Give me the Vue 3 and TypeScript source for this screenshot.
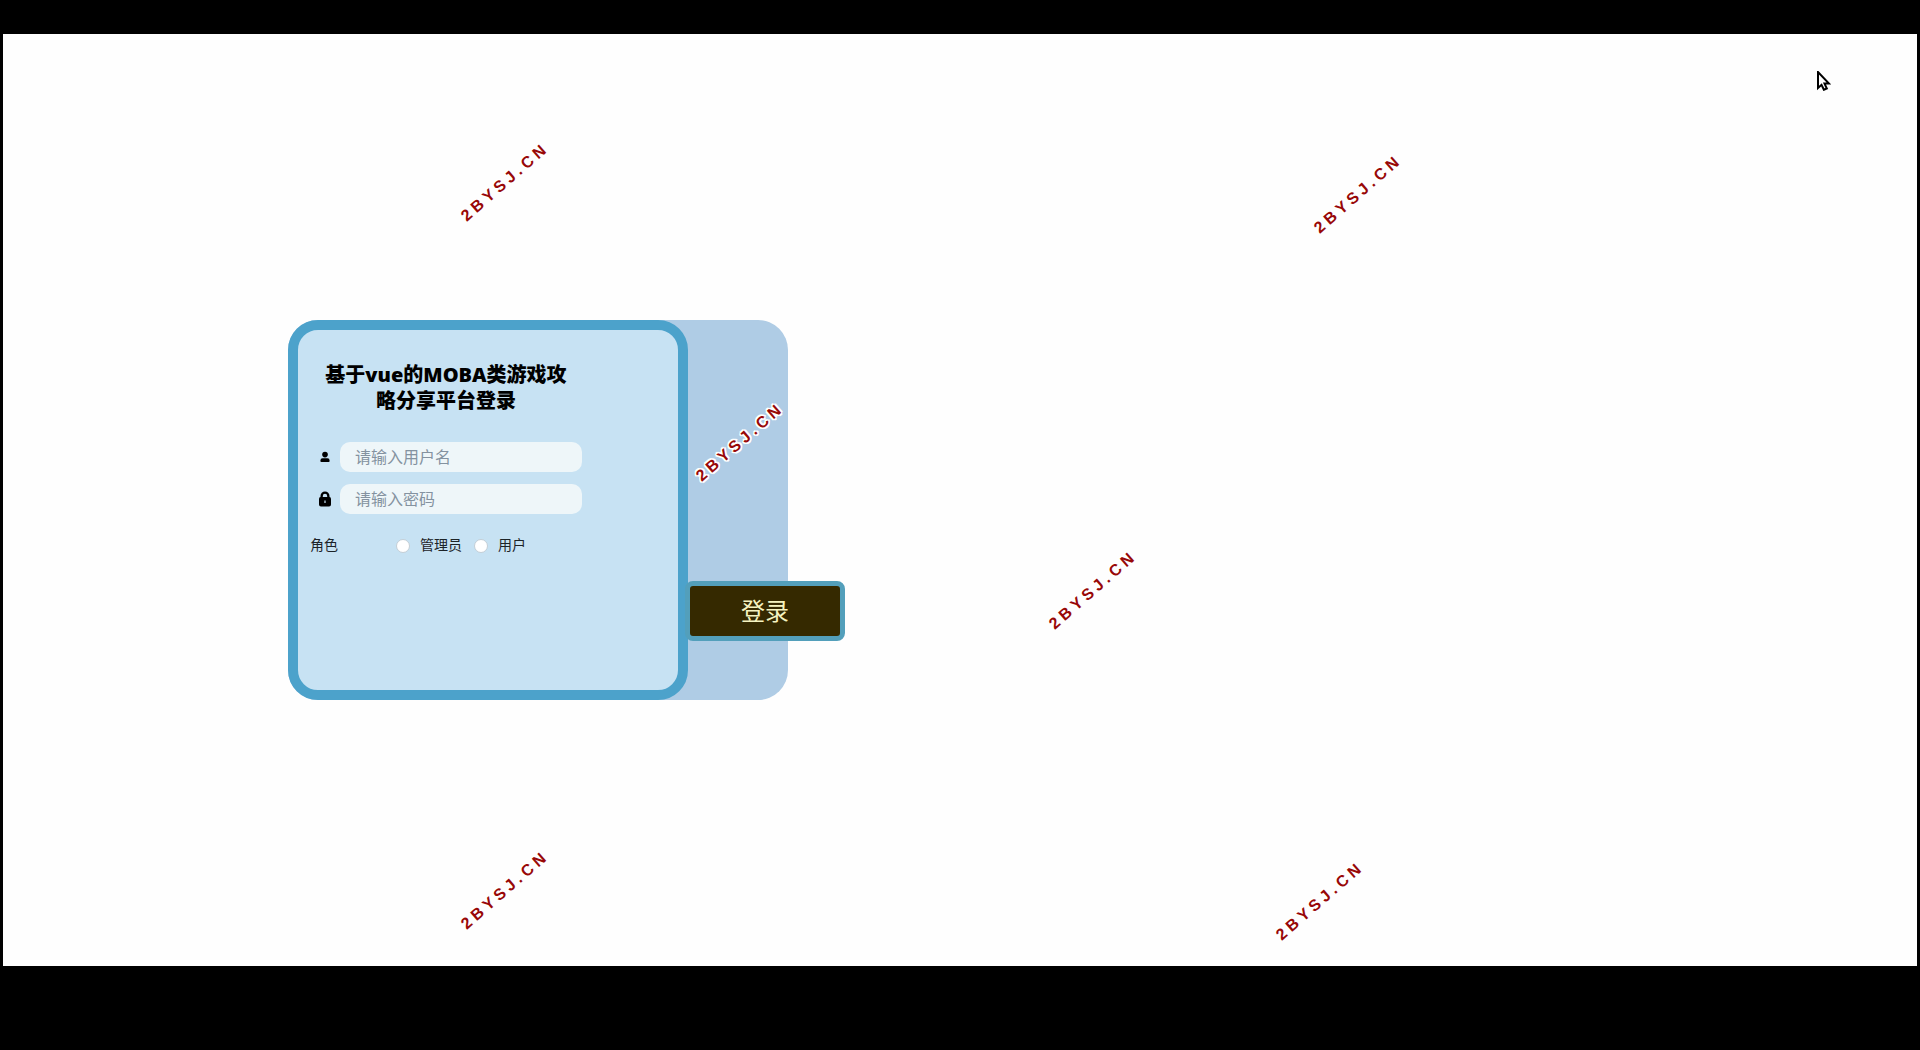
<script setup lang="ts">
import { ref } from 'vue'

interface Mark {
  id: string
  text: string
}

const username = ref('')
const password = ref('')
const role = ref('')

const roles = [
  { value: 'admin', label: '管理员' },
  { value: 'user', label: '用户' },
]

const marks: Mark[] = ['a', 'b', 'c', 'd', 'e', 'f'].map((id) => ({ id, text: '2BYSJ.CN' }))
</script>

<template>
  <div class="page">
    <main class="stage">
      <section class="card">
        <form class="panel" id="login" @submit.prevent>
          <h1 class="title">
            <span>基于vue的MOBA类游戏攻</span>
            <span>略分享平台登录</span>
          </h1>

          <div class="field">
            <label for="username" aria-label="用户名">
              <svg width="10" height="12" viewBox="0 0 10 12" aria-hidden="true">
                <circle cx="5" cy="3.600" r="2.800" />
                <path d="M2.500 7.200h5Q9.600 7.200 9.600 9.500v.6q0 .9-.9.9H1.300q-.9 0-.9-.9v-.6Q.4 7.200 2.500 7.200z" />
              </svg>
            </label>
            <input id="username" v-model="username" type="text" placeholder="请输入用户名" />
          </div>

          <div class="field">
            <label for="password" aria-label="密码">
              <svg width="12" height="16" viewBox="0 0 12 16" aria-hidden="true">
                <path
                  fill-rule="evenodd"
                  d="M1.500 6V5a4.500 4.500 0 0 1 9 0v1q1.500 .2 1.500 2v5.500q0 2-2 2H2q-2 0-2-2V8q0-1.800 1.500-2zm2.300 0h4.400V5a2.200 2.200 0 0 0-4.400 0zm1.600 3.500v2.500h1.200V9.500z"
                />
              </svg>
            </label>
            <input id="password" v-model="password" type="password" placeholder="请输入密码" />
          </div>

          <div class="roles" role="radiogroup" aria-labelledby="role-label">
            <span id="role-label" class="roles-label">角色</span>
            <label v-for="item in roles" :key="item.value" class="option">
              <input v-model="role" type="radio" name="role" :value="item.value" />
              {{ item.label }}
            </label>
          </div>
        </form>
        <button class="submit" type="submit" form="login">登录</button>
      </section>

      <span v-for="mark in marks" :key="mark.id" class="mark" :class="`mark-${mark.id}`">{{ mark.text }}</span>

      <svg class="pointer" width="14" height="20" viewBox="0 0 14 20" aria-hidden="true">
        <path d="M1 1v16l3.500-3.200 2.400 5 2.900-1.300-2.300-4.900H12z" />
      </svg>
    </main>
  </div>
</template>

<style>
body {
  margin: 0;
  background: #000;
}
</style>

<style scoped>
.page {
  box-sizing: border-box;
  min-height: 100vh;
  padding: 34px 3px 84px;
  display: flex;
  flex-direction: column;
  background: #000;
  font-family: 'Noto Sans', 'Noto Sans CJK SC', sans-serif;
}

.stage {
  position: relative;
  flex: 1;
  box-sizing: border-box;
  padding: 286px 0 120px 285px;
  overflow: hidden;
  background: #fefefe;
}

.card {
  position: relative;
  width: 500px;
  border-radius: 30px;
  background: #afcce5;
}

.panel {
  box-sizing: border-box;
  width: 400px;
  min-height: 380px;
  padding: 32px 96px 30px 12px;
  border: 10px solid #4ca2cb;
  border-radius: 30px;
  background: #c7e2f3;
}

.title {
  margin: 0 0 28px;
  font-size: 20px;
  line-height: 26px;
  font-weight: 900;
  text-align: center;
  white-space: nowrap;
  color: #000;
}

.title span {
  display: block;
}

.field {
  display: flex;
  align-items: center;
  margin-bottom: 12px;
}

.field label {
  width: 30px;
  display: flex;
  justify-content: center;
}

.field input {
  box-sizing: border-box;
  flex: 1;
  min-width: 0;
  height: 30px;
  padding: 0 15px;
  border: 0;
  border-radius: 10px;
  outline: 0;
  background: #eef6f9;
  font: inherit;
  font-size: 16px;
  color: #333;
}

.field input::placeholder {
  color: #8492a0;
  opacity: 1;
}

.roles {
  display: flex;
  align-items: center;
  margin-top: 19px;
  font-size: 14px;
  line-height: 24px;
  color: #1c2327;
}

.roles-label {
  width: 86px;
}

.option {
  display: flex;
  align-items: center;
  gap: 10px;
  margin-right: 12px;
  white-space: nowrap;
}

.option input {
  appearance: none;
  box-sizing: border-box;
  width: 14px;
  height: 14px;
  margin: 2px 0 0;
  border: 1px solid #c3ced6;
  border-radius: 50%;
  background: #fff;
}

.option input:checked {
  border: 4px solid #4ca2cb;
}

.submit {
  position: absolute;
  right: -57px;
  bottom: 59px;
  box-sizing: border-box;
  width: 160px;
  height: 60px;
  padding: 0 0 4px;
  border: 5px solid #539fbb;
  border-radius: 8px;
  background: #352900;
  font: inherit;
  font-size: 24px;
  color: #f5f3c0;
}

.mark {
  position: absolute;
  transform: translate(-50%, -50%) rotate(-41deg);
  font-family: 'Liberation Sans', Arial, sans-serif;
  font-size: 16px;
  line-height: 20px;
  font-weight: 700;
  letter-spacing: 4px;
  white-space: nowrap;
  color: #980808;
  text-shadow: -1px -1px #fff, 1px -1px #fff, -1px 1px #fff, 1px 1px #fff, 0 2px #fff, 0 -2px #fff, 2px 0 #fff, -2px 0 #fff;
}

.mark-a {
  left: 502px;
  top: 148px;
}

.mark-b {
  left: 1355px;
  top: 160px;
}

.mark-c {
  left: 737px;
  top: 408px;
}

.mark-d {
  left: 1090px;
  top: 556px;
}

.mark-e {
  left: 502px;
  top: 856px;
}

.mark-f {
  left: 1317px;
  top: 867px;
}

.pointer {
  position: absolute;
  left: 1814px;
  top: 37px;
}

.pointer path {
  fill: #fff;
  stroke: #000;
  stroke-width: 2px;
}
</style>
